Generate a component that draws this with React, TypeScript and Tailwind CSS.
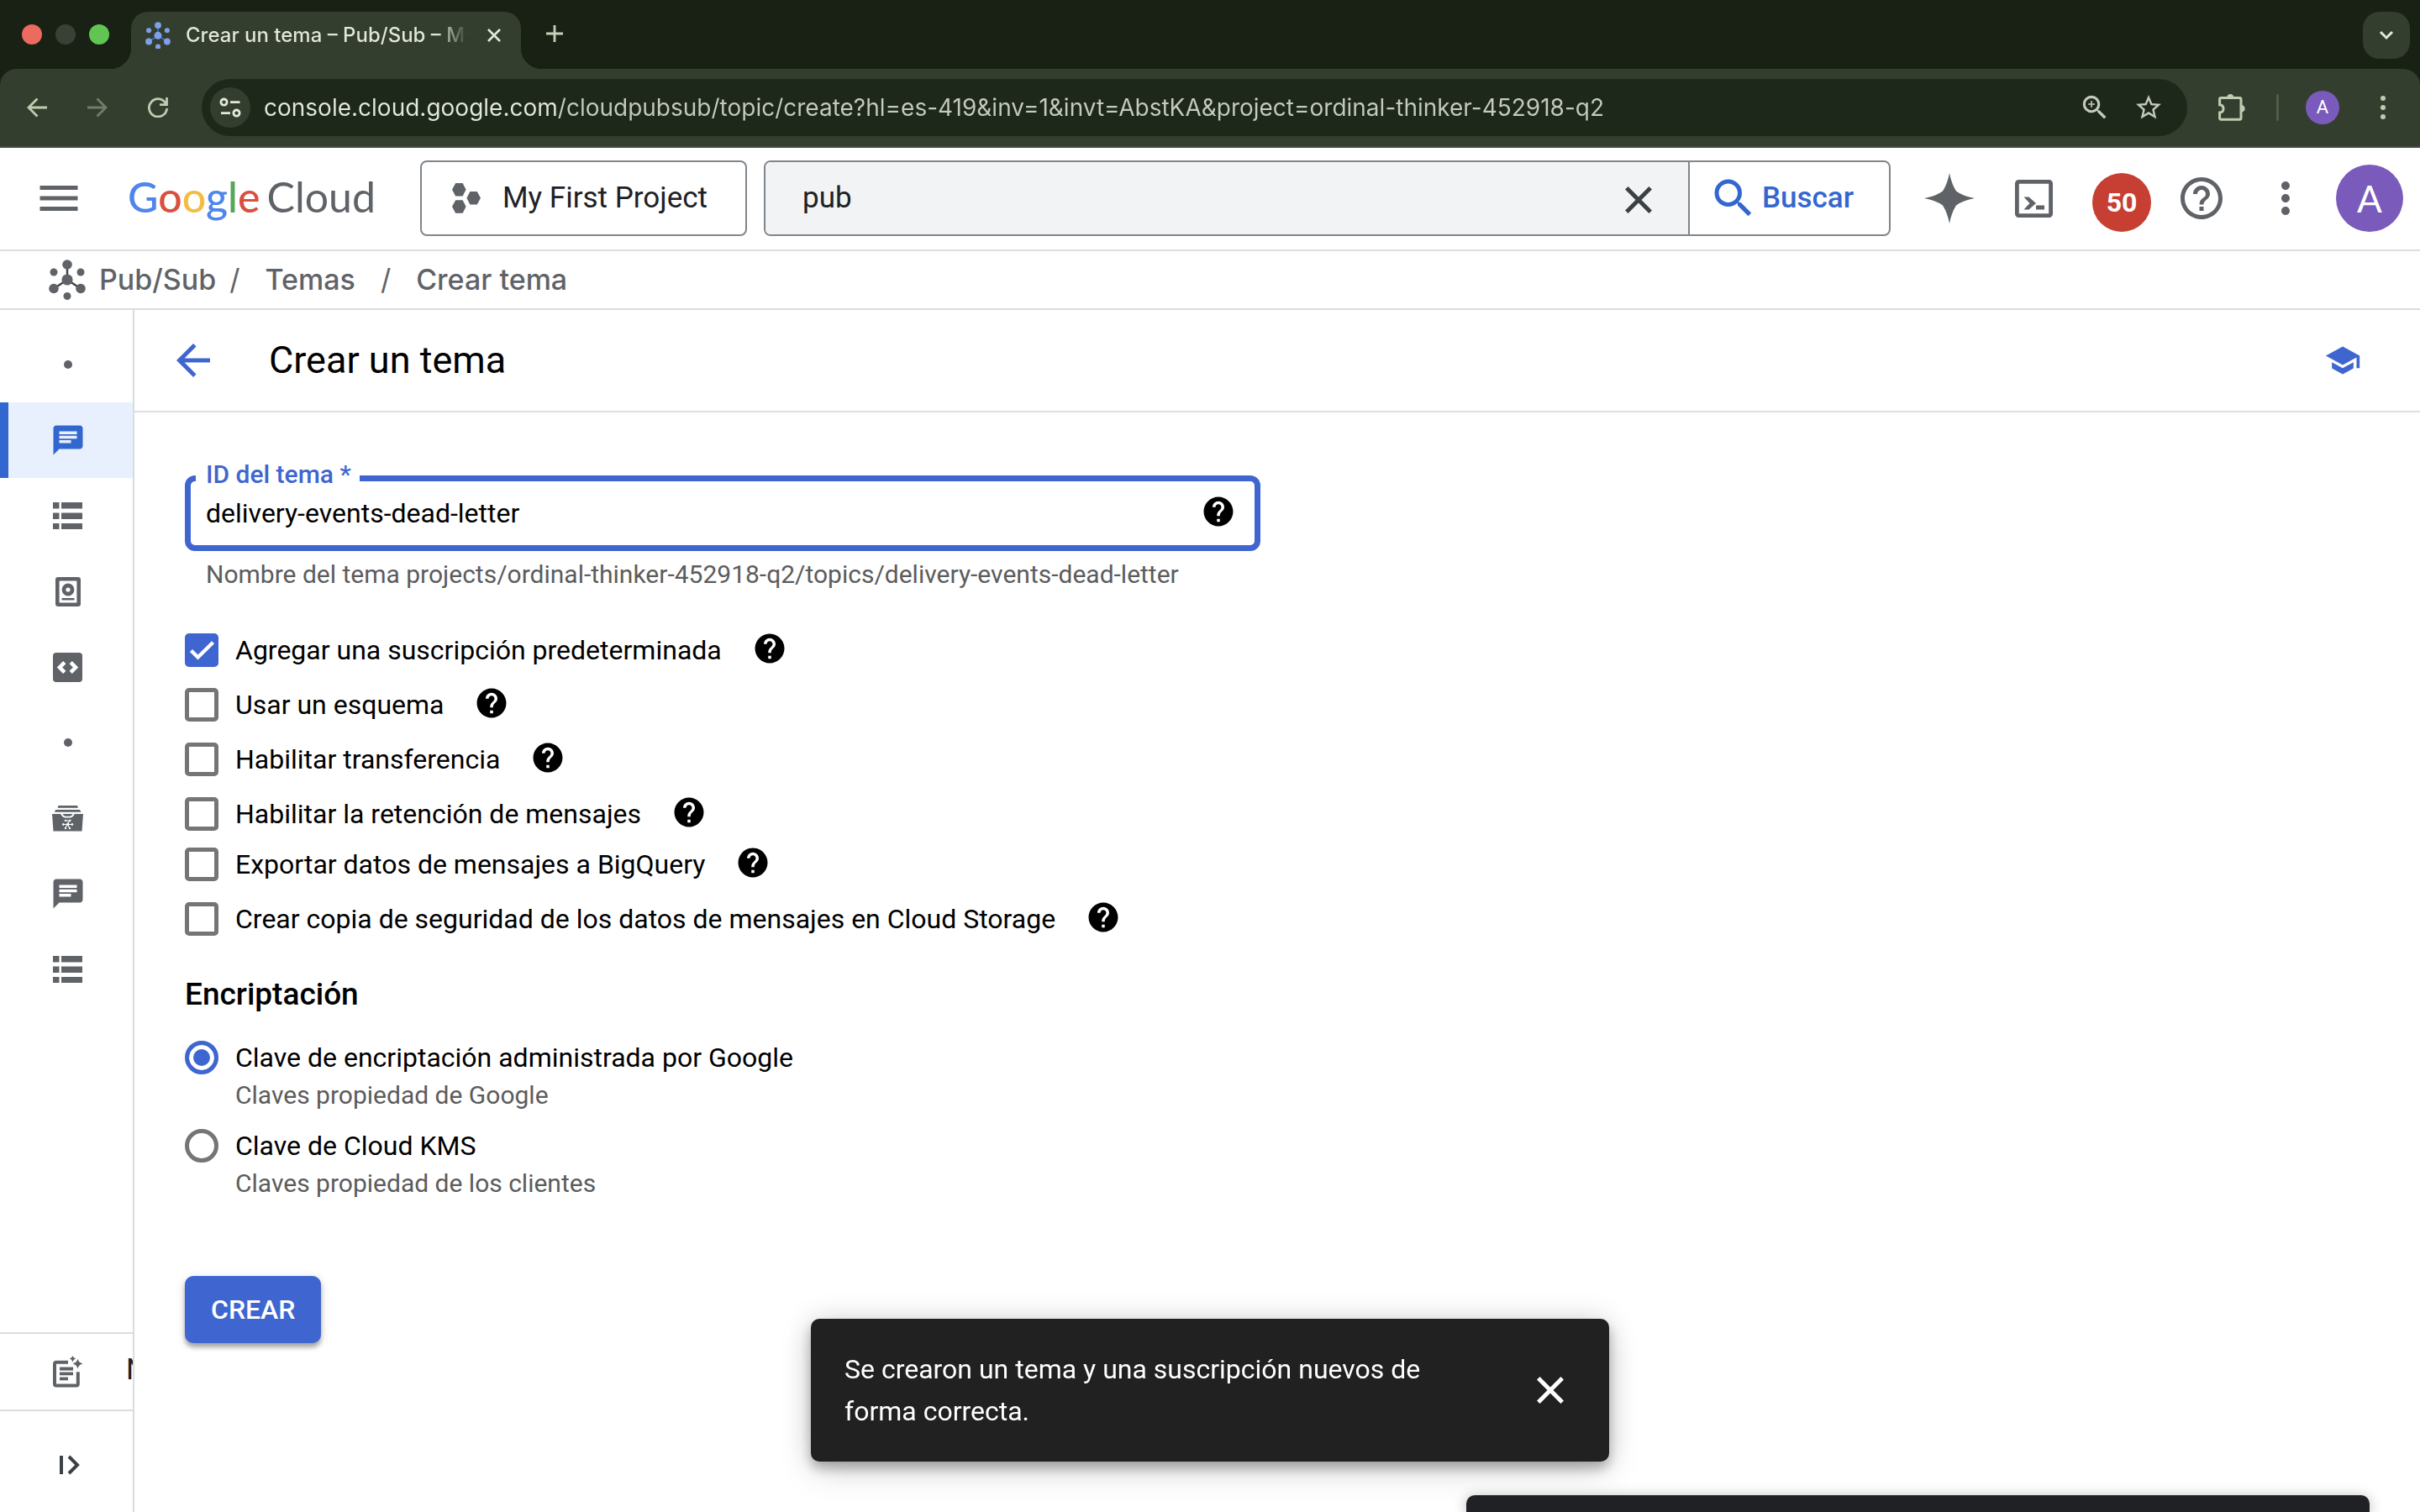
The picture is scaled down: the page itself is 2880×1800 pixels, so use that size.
import React from 'react';
import {
  MdArrowBack,
  MdChat,
  MdHelp,
  MdHelpOutline,
  MdMenu,
  MdMoreVert,
  MdSchool,
  MdSearch,
  MdStarBorder,
  MdZoomIn,
} from 'react-icons/md';

function PubSubIcon({ className, link }: { className: string; link: string }) {
  return (
    <svg viewBox="0 0 44 48" className={className} fill="currentColor" aria-hidden="true">
      <path d="M22 24V8M22 24L7 34M22 24L37 34" stroke={link} strokeWidth="2.5" />
      <circle cx="22" cy="24" r="6.6" />
      <circle cx="22" cy="6" r="5.8" />
      <circle cx="6" cy="34.5" r="5.8" />
      <circle cx="38" cy="34.5" r="5.8" />
      <circle cx="6" cy="15" r="4.5" />
      <circle cx="38" cy="15" r="4.5" />
      <circle cx="22" cy="43.5" r="4.5" />
    </svg>
  );
}

function CrossIcon() {
  return (
    <svg viewBox="0 0 54 54" className="size-[54px]" aria-hidden="true">
      <path d="M12.8 12.8L41.2 41.2M41.2 12.8L12.8 41.2" stroke="currentColor" strokeWidth="5" />
    </svg>
  );
}

function ListIcon() {
  return (
    <svg viewBox="0 0 14 13" className="w-[35px]" fill="currentColor" aria-hidden="true">
      {[0, 5, 10].map((y) => (
        <g key={y}>
          <rect x="0" y={y} width="3" height="3" />
          <rect x="4" y={y} width="10" height="3" />
        </g>
      ))}
    </svg>
  );
}

function SnapshotIcon() {
  return (
    <svg viewBox="0 0 30 35" className="w-[30px]" aria-hidden="true">
      <rect x="2.3" y="2.3" width="25.4" height="30.4" rx="1" fill="none" stroke="currentColor" strokeWidth="4.6" />
      <circle cx="15" cy="15" r="5" fill="none" stroke="currentColor" strokeWidth="4.8" />
      <path d="M7.5 26.2H22.5" stroke="currentColor" strokeWidth="2.5" />
    </svg>
  );
}

function SchemaIcon() {
  return (
    <svg viewBox="0 0 35 35" className="w-[35px]" aria-hidden="true">
      <rect width="35" height="35" rx="4" fill="currentColor" />
      <path d="M13.8 11.6L8 17.5L13.8 23.4M21.2 11.6L27 17.5L21.2 23.4" fill="none" stroke="white" strokeWidth="4.6" />
    </svg>
  );
}

function LiteIcon() {
  return (
    <svg viewBox="0 0 37 31" className="w-[37px]" fill="currentColor" aria-hidden="true">
      <path d="M7.5 0H30L31 2.8H6.5ZM4.2 5H33L34.5 7.8H2.8Z" />
      <path d="M0 10H37L35.5 30.5H1.5Z" />
      <path d="M11 9.5Q13 13.6 16 13.6H21Q24 13.6 26 9.5" fill="none" stroke="white" strokeWidth="1.8" />
      <g fill="white" stroke="white">
        <path d="M18.5 22.5L21 17.5M18.5 22.5L12.8 22.5M18.5 22.5L24.4 22.5M18.5 22.5L15.5 27M18.5 22.5L21 27M16 18H21" strokeWidth="1.1" />
        <circle cx="18.5" cy="22.3" r="1.2" />
        <circle cx="16" cy="17.8" r=".8" />
        <circle cx="21.4" cy="17.8" r=".8" />
        <circle cx="13.4" cy="22.4" r="1" />
        <circle cx="23.8" cy="22.4" r="1" />
        <circle cx="16" cy="27" r=".8" />
        <circle cx="21" cy="27" r=".8" />
      </g>
    </svg>
  );
}

function NotesIcon() {
  return (
    <svg viewBox="0 0 36 38" className="w-[36px]" aria-hidden="true">
      <path d="M18 7.7H4Q2 7.7 2 9.7V33.5Q2 35.5 4 35.5H27.8Q29.8 35.5 29.8 33.5V19.3" fill="none" stroke="currentColor" strokeWidth="4" />
      <path d="M8 15.5H24M8 21.4H24M8 27.4H18" stroke="currentColor" strokeWidth="3.8" />
      <path d="M29.5 3.6Q30.6 8.4 35.5 9.5Q30.6 10.6 29.5 15.4Q28.4 10.6 23.5 9.5Q28.4 8.4 29.5 3.6ZM23.5 0Q24.3 2.8 27.2 3.6Q24.3 4.4 23.5 7.4Q22.7 4.4 19.8 3.6Q22.7 2.8 23.5 0Z" fill="currentColor" />
    </svg>
  );
}

const navItems = [
  { label: 'Temas', icon: <MdChat size={42} />, active: true },
  { label: 'Suscripciones', icon: <ListIcon /> },
  { label: 'Instantáneas', icon: <SnapshotIcon /> },
  { label: 'Esquemas', icon: <SchemaIcon /> },
  { label: 'Pub/Sub Lite', dot: true },
  { label: 'Reservas de Lite', icon: <LiteIcon /> },
  { label: 'Temas de Lite', icon: <MdChat size={42} /> },
  { label: 'Suscripciones de Lite', icon: <ListIcon /> },
];

const optionGroups = [
  [
    { id: 'sub', label: 'Agregar una suscripción predeterminada', checked: true },
    { id: 'schema', label: 'Usar un esquema' },
    { id: 'ingest', label: 'Habilitar transferencia' },
    { id: 'retain', label: 'Habilitar la retención de mensajes' },
  ],
  [
    { id: 'bq', label: 'Exportar datos de mensajes a BigQuery' },
    { id: 'gcs', label: 'Crear copia de seguridad de los datos de mensajes en Cloud Storage' },
  ],
];

function Option({ id, label, checked }: { id: string; label: string; checked?: boolean }) {
  return (
    <div className="flex h-10 items-center">
      <span className="relative size-10 shrink-0">
        <input
          id={id}
          type="checkbox"
          defaultChecked={checked}
          className="peer block size-10 appearance-none rounded-[5px] border-[5px] border-[#757575] checked:border-[#3f66d0] checked:bg-[#3f66d0]"
        />
        <svg viewBox="0 0 40 40" className="pointer-events-none absolute inset-0 hidden size-10 peer-checked:block" aria-hidden="true">
          <path d="M7.5 20.5L15.5 28.5L33.5 10.8" fill="none" stroke="white" strokeWidth="4.4" />
        </svg>
      </span>
      <label htmlFor={id} className="ml-5 text-[32px] leading-10">
        {label}
      </label>
      <button aria-label="Ayuda" className="mb-1 ml-9">
        <MdHelp size={42} />
      </button>
    </div>
  );
}

function KeyOption({ id, label, hint, checked }: { id: string; label: string; hint: string; checked?: boolean }) {
  return (
    <div className="flex items-start gap-5">
      <input
        id={id}
        type="radio"
        name="encryption"
        defaultChecked={checked}
        className="size-10 shrink-0 appearance-none rounded-full border-[5px] border-[#757575] checked:border-[#3f66d0] checked:bg-[#3f66d0] checked:shadow-[inset_0_0_0_5px_white]"
      />
      <label htmlFor={id} className="text-[32px] leading-10">
        {label}
        <span className="mt-[7px] block text-[30px] leading-9 text-[#5c5c5c]">{hint}</span>
      </label>
    </div>
  );
}

function BrowserChrome() {
  return (
    <div className="shrink-0 bg-[#192114] font-['Inter',sans-serif]">
      <div className="flex h-[82px] items-start">
        <div className="flex h-full w-[156px] items-center gap-4 pl-[26px]">
          <span className="size-6 rounded-full bg-[#ec6a5e]" />
          <span className="size-6 rounded-full bg-[#3b4037]" />
          <span className="size-6 rounded-full bg-[#61c554]" />
        </div>
        <div className="relative mt-[14px] flex h-[68px] w-[464px] items-center rounded-t-[20px] bg-[#343e2e] pr-6 pb-3 pl-[17px]">
          <span className="absolute bottom-0 -left-6 size-6 bg-[radial-gradient(circle_at_0_0,transparent_24px,#343e2e_24px)]" />
          <span className="absolute -right-6 bottom-0 size-6 bg-[radial-gradient(circle_at_100%_0,transparent_24px,#343e2e_24px)]" />
          <PubSubIcon className="w-[30px] text-[#7f9fe9]" link="#3f6ad8" />
          <span className="ml-[18px] min-w-0 flex-1 overflow-hidden bg-[linear-gradient(90deg,#e3e8dc_300px,transparent_336px)] bg-clip-text text-[24px] leading-8 font-medium whitespace-nowrap text-transparent">
            Crear un tema – Pub/Sub – My First Project
          </span>
          <button aria-label="Cerrar pestaña" className="ml-6">
            <svg viewBox="0 0 16 16" className="size-4" aria-hidden="true">
              <path d="M1 1L15 15M15 1L1 15" stroke="#e3e8dc" strokeWidth="2.6" />
            </svg>
          </button>
        </div>
        <button aria-label="Pestaña nueva" className="flex h-20 w-20 items-center justify-center">
          <svg viewBox="0 0 20 20" className="size-5" aria-hidden="true">
            <path d="M10 0V20M0 10H20" stroke="#c3d1b9" strokeWidth="2.8" />
          </svg>
        </button>
        <button aria-label="Buscar pestañas" className="mt-[14px] mr-3 ml-auto flex size-14 items-center justify-center rounded-[20px] bg-[#343e2e]">
          <svg viewBox="0 0 18 12" className="w-[18px]" aria-hidden="true">
            <path d="M2 2L9 9L16 2" fill="none" stroke="#e3e8dc" strokeWidth="3" />
          </svg>
        </button>
      </div>

      <div className="flex h-[94px] items-center rounded-t-[20px] border-b-2 border-[#4a4a40] bg-[#343e2e] pr-6 pl-2 text-[#bccdb0]">
        <button aria-label="Atrás" className="flex w-[72px] justify-center">
          <svg viewBox="0 0 24 24" className="size-6" fill="none" stroke="currentColor" strokeWidth="2.8" aria-hidden="true">
            <path d="M24 12H2M12.5 1.5L2 12L12.5 22.5" />
          </svg>
        </button>
        <button aria-label="Adelante" className="flex w-[72px] justify-center text-[#717d68]">
          <svg viewBox="0 0 24 24" className="size-6" fill="none" stroke="currentColor" strokeWidth="2.8" aria-hidden="true">
            <path d="M0 12H22M11.5 1.5L22 12L11.5 22.5" />
          </svg>
        </button>
        <button aria-label="Volver a cargar" className="flex w-[72px] justify-center">
          <svg viewBox="0 0 24 24" className="size-6" fill="none" stroke="currentColor" strokeWidth="2.8" aria-hidden="true">
            <path d="M22.5 0V8.6H14M22.6 13A10.6 10.6 0 1 1 21.6 7.8" />
          </svg>
        </button>
        <div className="ml-4 flex h-[68px] min-w-0 flex-1 items-center rounded-full bg-[#1e281a] pr-[14px] pl-[10px]">
          <button aria-label="Información del sitio" className="flex size-12 shrink-0 items-center justify-center rounded-full bg-[#343e2e]">
            <svg viewBox="0 0 26 24" className="w-[26px]" fill="none" stroke="#e3e8dc" strokeWidth="2.8" aria-hidden="true">
              <circle cx="5.5" cy="5.6" r="3.6" />
              <path d="M13 5.6H24.5M2 18.6H13" />
              <circle cx="20.5" cy="18.6" r="3.6" />
            </svg>
          </button>
          <input
            aria-label="Barra de direcciones"
            defaultValue="console.cloud.google.com/cloudpubsub/topic/create?hl=es-419&inv=1&invt=AbstKA&project=ordinal-thinker-452918-q2"
            className="ml-4 min-w-0 flex-1 bg-[linear-gradient(90deg,#e3e8dc_350px,#c5cabf_350px)] bg-clip-text text-[28px] leading-10 text-transparent"
          />
          <button aria-label="Zoom" className="flex w-16 justify-center text-[#c5cabf]">
            <MdZoomIn size={38} />
          </button>
          <button aria-label="Agregar a favoritos" className="flex w-16 justify-center text-[#c5cabf]">
            <MdStarBorder size={36} />
          </button>
        </div>
        <button aria-label="Extensiones" className="flex w-[106px] justify-center">
          <svg viewBox="0 0 34 34" className="w-[34px]" aria-hidden="true">
            <path
              d="M4.2 5.6H26.2Q28 5.6 28 7.4V29.4Q28 31.2 26.2 31.2H4.2Q2.6 31.2 2.6 29.6V23Q7 22.6 7 18.4Q7 14.2 2.6 13.8V7.2Q2.6 5.6 4.2 5.6Z"
              fill="none"
              stroke="currentColor"
              strokeWidth="3"
            />
            <path d="M11 5.4A4.3 4.3 0 0 1 19.6 5.4ZM28.4 14A4.3 4.3 0 0 1 28.4 22.6Z" fill="currentColor" />
          </svg>
        </button>
        <span className="h-8 w-[3px] rounded-full bg-[#4f5d48]" />
        <button aria-label="Perfil" className="flex w-[104px] justify-center">
          <span className="flex size-10 items-center justify-center rounded-full bg-[#7a5abb] font-['Roboto',sans-serif] text-[22px] leading-6 text-white">A</span>
        </button>
        <button aria-label="Menú de Chrome" className="flex w-10 justify-center">
          <svg viewBox="0 0 6 28" className="h-7" fill="currentColor" aria-hidden="true">
            <circle cx="3" cy="3" r="3" />
            <circle cx="3" cy="14" r="3" />
            <circle cx="3" cy="25" r="3" />
          </svg>
        </button>
      </div>
    </div>
  );
}

function CloudHeader() {
  return (
    <header className="flex h-[123px] shrink-0 items-center border-b-2 border-[#dadce0] pr-5 pb-px text-[#5f6368]">
      <button aria-label="Menú de navegación" className="flex w-[140px] shrink-0 justify-center">
        <MdMenu size={60} />
      </button>
      <a href="#inicio" className="flex w-[360px] shrink-0 items-baseline pb-1 pl-3 font-['Lato',sans-serif] text-[50px] leading-[60px] whitespace-nowrap">
        <span className="font-medium">
          <span className="text-[#4f86ec]">G</span>
          <span className="text-[#d9503f]">o</span>
          <span className="text-[#f2bd42]">o</span>
          <span className="text-[#4f86ec]">g</span>
          <span className="text-[#58a55c]">l</span>
          <span className="text-[#d9503f]">e</span>
        </span>
        <span className="ml-2">Cloud</span>
      </a>
      <button className="flex h-[90px] w-[389px] shrink-0 items-center rounded-lg border-2 border-[#80868b] pl-9 text-[35px] leading-10 text-[#202124]">
        <svg viewBox="0 0 34 36" className="mr-[26px] w-[34px]" fill="#5f6368" aria-hidden="true">
          <path d="M4.2 0H12.6L16.6 7.8L12.6 15.6H4.2L0 7.8ZM21.4 10H29.8L34 17.8L29.8 25.6H21.4L17.4 17.8ZM4.2 20.2H12.6L16.6 28L12.6 35.8H4.2L0 28Z" />
        </svg>
        My First Project
      </button>
      <form className="mr-5 ml-5 flex h-[90px] min-w-0 flex-1 overflow-hidden rounded-lg border-2 border-[#80868b]" onSubmit={(e) => e.preventDefault()}>
        <div className="flex min-w-0 flex-1 items-center bg-[#f1f3f4] pr-8 pl-11">
          <input aria-label="Buscar productos y recursos" defaultValue="pub" className="min-w-0 flex-1 bg-transparent text-[35px] leading-10 text-[#202124]" />
          <button type="button" aria-label="Borrar búsqueda" className="pt-1 text-[#3c4043]">
            <CrossIcon />
          </button>
        </div>
        <button type="submit" className="flex w-[239px] items-center gap-1 border-l-2 border-[#80868b] pl-[22px] text-[35px] leading-10 font-medium text-[#3367d0]">
          <MdSearch size={60} />
          Buscar
        </button>
      </form>
      <button aria-label="Gemini" className="flex w-[100px] justify-center">
        <svg viewBox="0 0 60 60" className="size-[60px]" fill="currentColor" aria-hidden="true">
          <path d="M30 0Q32.5 13 38 21.5Q46 27.5 60 30Q46 32.5 38 38.5Q32.5 47 30 60Q27.5 47 22 38.5Q14 32.5 0 30Q14 27.5 22 21.5Q27.5 13 30 0Z" />
        </svg>
      </button>
      <button aria-label="Cloud Shell" className="flex w-[100px] justify-center">
        <svg viewBox="0 0 45 45" className="size-[45px]" aria-hidden="true">
          <rect x="2.4" y="2.4" width="40.2" height="40.2" rx="2" fill="none" stroke="currentColor" strokeWidth="4.8" />
          <path d="M10.5 20.5H16.5L25 28L16.5 35.5H10.5L17.5 28ZM25 30.5H35V35.5H25Z" fill="currentColor" />
        </svg>
      </button>
      <button aria-label="Notificaciones" className="flex w-[110px] justify-center pt-[10px]">
        <span className="flex size-[70px] items-center justify-center rounded-full bg-[#c63f32] text-[32px] leading-10 font-bold text-white">50</span>
      </button>
      <button aria-label="Ayuda" className="flex w-20 justify-center">
        <MdHelpOutline size={60} />
      </button>
      <button aria-label="Más opciones" className="flex w-[120px] justify-center">
        <MdMoreVert size={60} />
      </button>
      <button aria-label="Cuenta" className="flex size-20 shrink-0 items-center justify-center rounded-full bg-[#7a5abb] font-['Lato',sans-serif] text-[44px] leading-10 text-white">
        A
      </button>
    </header>
  );
}

export default function App() {
  return (
    <div className="flex h-screen flex-col overflow-hidden bg-white font-['Roboto',sans-serif] text-black">
      <BrowserChrome />
      <CloudHeader />

      <nav aria-label="Ruta" className="flex h-[70px] shrink-0 items-center border-b-2 border-[#dadce0] pl-[58px] font-['Inter',sans-serif] text-[34px] leading-10 font-medium text-[#5f6368]">
        <PubSubIcon className="w-[44px]" link="#444444" />
        <a href="#pubsub" className="ml-4">Pub/Sub</a>
        <span className="ml-4 font-normal">/</span>
        <a href="#temas" className="ml-[30px]">Temas</a>
        <span className="ml-[30px] font-normal">/</span>
        <span className="ml-[30px]">Crear tema</span>
      </nav>

      <div className="flex min-h-0 flex-1">
        <aside className="flex w-40 shrink-0 flex-col border-r-2 border-[#dadce0] text-[#5f6368]">
          <nav aria-label="Pub/Sub" className="flex-1 pt-5">
            <span className="flex h-[90px] items-center justify-center pl-[3px]">
              <span className="size-[10px] rounded-full bg-current" />
            </span>
            {navItems.map((item) => (
              <a
                key={item.label}
                href="#nav"
                aria-label={item.label}
                className={
                  item.active
                    ? 'relative flex h-[90px] items-center justify-center bg-[#e8f0fe] pl-[3px] text-[#3367d0] before:absolute before:inset-y-0 before:left-0 before:w-[10px] before:bg-[#3367d0]'
                    : 'flex h-[90px] items-center justify-center pl-[3px]'
                }
              >
                {item.dot ? <span className="size-[10px] rounded-full bg-current" /> : item.icon}
              </a>
            ))}
          </nav>
          <a href="#notas" className="flex h-[92px] items-center overflow-hidden border-t-2 border-[#dadce0] pl-[63px] whitespace-nowrap">
            <span className="shrink-0">
              <NotesIcon />
            </span>
            <span className="ml-[51px] pb-1 text-[35px] leading-10 text-[#202124]">Notas de la versión</span>
          </a>
          <button aria-label="Expandir menú" className="flex h-[122px] items-center justify-center border-t-2 border-[#dadce0] pt-2 pl-[7px] text-[#3c4043]">
            <svg viewBox="0 0 24 24" className="size-6" fill="none" stroke="currentColor" strokeWidth="4" aria-hidden="true">
              <path d="M2 1V23M11 2L21 12L11 22" />
            </svg>
          </button>
        </aside>

        <main className="min-w-0 flex-1">
          <div className="flex h-[122px] items-center border-b-2 border-[#e0e0e0] pr-[70px] pl-10">
            <button aria-label="Volver" className="text-[#3f66d0]">
              <MdArrowBack size={60} />
            </button>
            <h1 className="ml-[60px] text-[45px] leading-[60px]">Crear un tema</h1>
            <button aria-label="Aprender" className="ml-auto text-[#3f66d0]">
              <MdSchool size={44} />
            </button>
          </div>

          <form className="pt-[75px] pl-[60px]" onSubmit={(e) => e.preventDefault()}>
            <div className="relative flex h-[90px] w-full max-w-[1280px] items-center rounded-xl border-[7px] border-[#3f66d0] pr-[22px] pl-[18px]">
              <label htmlFor="topic-id" className="absolute -top-[26px] left-[6px] bg-white pr-[10px] pl-3 text-[30px] leading-9 font-medium text-[#3f66d0]">
                ID del tema *
              </label>
              <input id="topic-id" defaultValue="delivery-events-dead-letter" className="min-w-0 flex-1 text-[32px] leading-10 outline-none" />
              <button type="button" aria-label="Ayuda" className="mb-1">
                <MdHelp size={42} />
              </button>
            </div>
            <p className="mt-[10px] pl-[25px] text-[30px] leading-9 text-[#5c5c5c]">
              Nombre del tema projects/ordinal-thinker-452918-q2/topics/delivery-events-dead-letter
            </p>

            <div className="mt-[52px] flex flex-col gap-5">
              {optionGroups.map((group) => (
                <div key={group[0].id} className="flex flex-col gap-[25px]">
                  {group.map((o) => (
                    <Option key={o.id} {...o} />
                  ))}
                </div>
              ))}
            </div>

            <h2 className="mt-[50px] text-[37px] leading-10 font-medium">Encriptación</h2>
            <div className="mt-[35px] flex flex-col gap-[22px]">
              <KeyOption id="google" label="Clave de encriptación administrada por Google" hint="Claves propiedad de Google" checked />
              <KeyOption id="kms" label="Clave de Cloud KMS" hint="Claves propiedad de los clientes" />
            </div>

            <button
              type="submit"
              className="mt-[92px] h-20 rounded-[10px] bg-[#3f66d0] px-[31px] text-[32px] leading-10 font-medium text-white shadow-[0_5px_5px_rgba(0,0,0,0.28),0_2px_12px_rgba(0,0,0,0.14)]"
            >
              CREAR
            </button>
          </form>
        </main>
      </div>

      <div
        role="status"
        className="fixed bottom-[60px] left-1/2 flex w-[950px] -translate-x-1/2 items-center rounded-[10px] bg-[#212121] py-[35px] pr-[43px] pl-10 text-white shadow-[0_8px_14px_rgba(0,0,0,0.26),0_12px_40px_rgba(0,0,0,0.14),0_0_36px_rgba(0,0,0,0.12)]"
      >
        <p className="w-[720px] text-[32px] leading-[50px]">Se crearon un tema y una suscripción nuevos de forma correcta.</p>
        <button aria-label="Cerrar" className="ml-auto">
          <CrossIcon />
        </button>
      </div>
      <div className="fixed right-[60px] bottom-0 h-5 w-[1075px] rounded-t-[10px] bg-[#202124] shadow-[0_2px_16px_rgba(0,0,0,0.3)]" />
    </div>
  );
}
